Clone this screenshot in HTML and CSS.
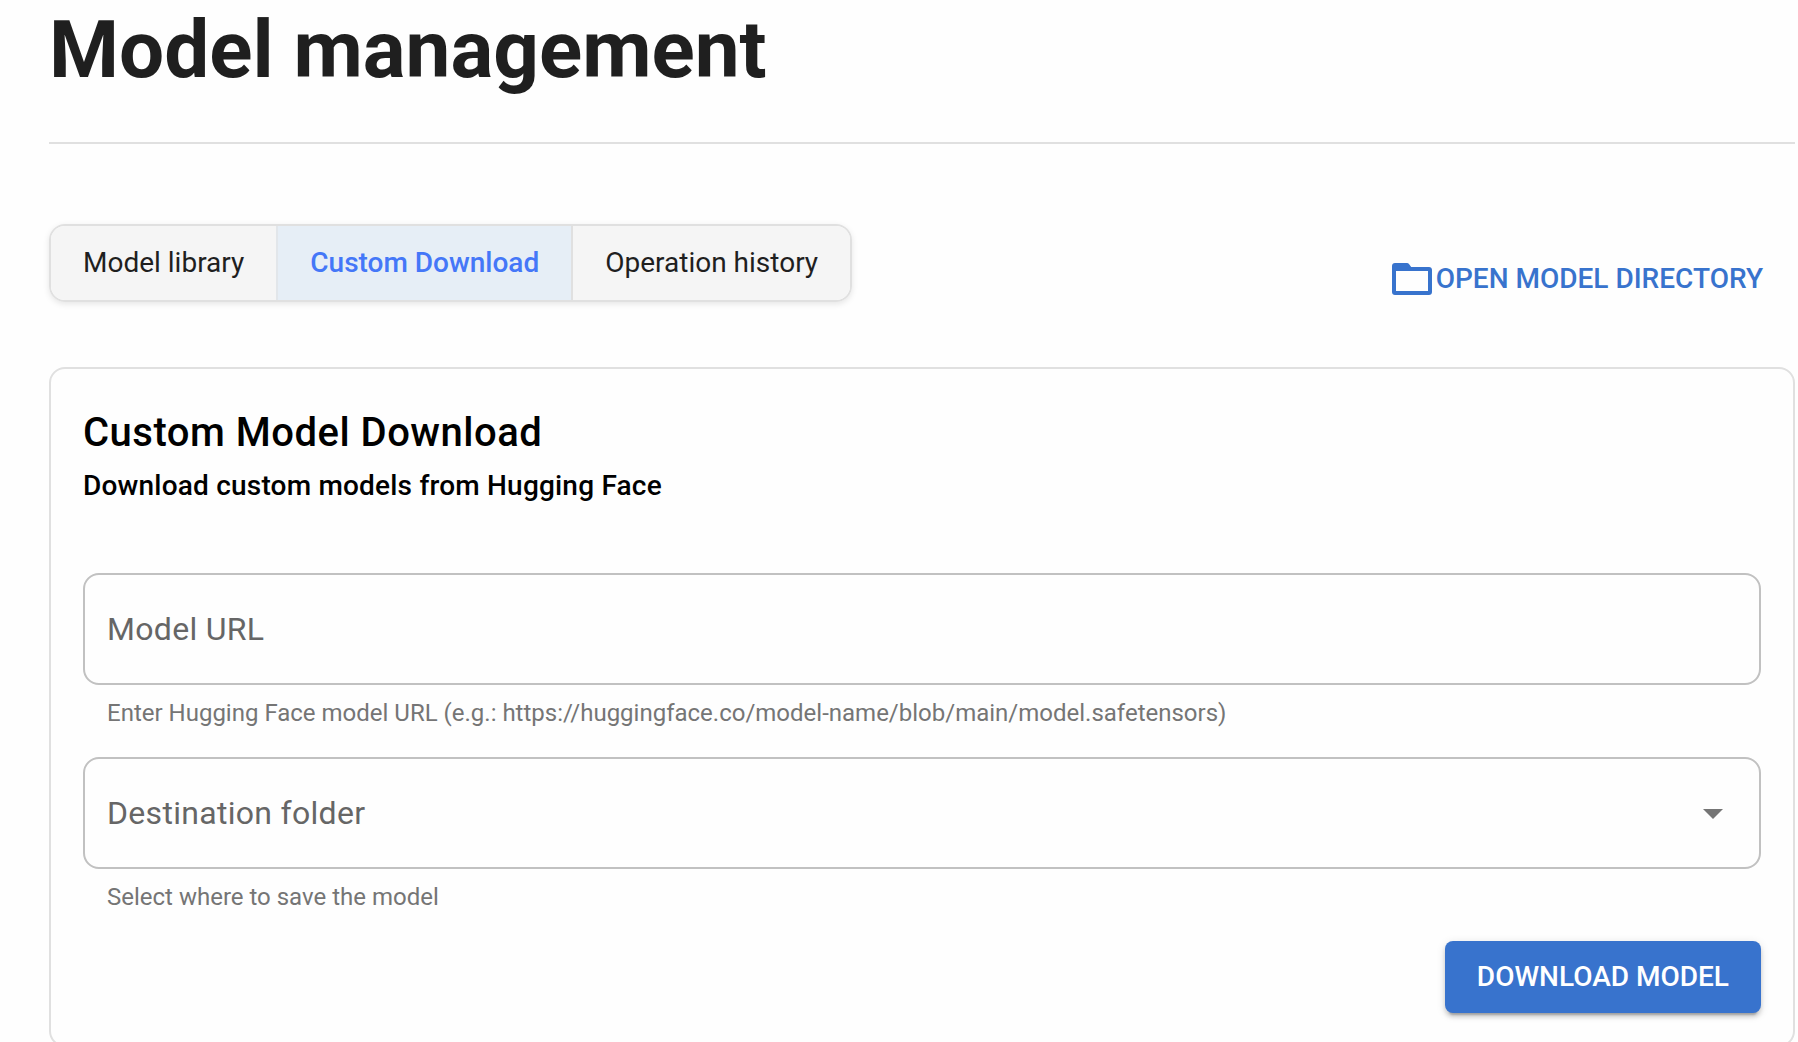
FILE: index.html
```html
<!DOCTYPE html>
<html lang="en">
<head>
<meta charset="utf-8">
<title>Model management</title>
<link rel="stylesheet" href="styles.css">
</head>
<body>
<main class="page">
  <h1 class="page-title">Model management</h1>
  <div class="toolbar">
    <nav class="tabs">
      <button class="tab">Model library</button>
      <button class="tab tab-active">Custom Download</button>
      <button class="tab">Operation history</button>
    </nav>
    <button class="open-dir">
      <svg class="folder-icon" viewBox="0 0 24 24"><path d="M20 18H4V8h16m0-2h-8.400L10.500 4.500Q10.100 4 9.500 4H3.500C2.600 4 2 4.600 2 5.500v13c0 .900.600 1.500 1.500 1.500h17c.900 0 1.500-.600 1.500-1.500v-11C22 6.600 21.400 6 20.500 6Z"/></svg>
      <span>OPEN MODEL DIRECTORY</span>
    </button>
  </div>
  <section class="card">
    <h2 class="card-title">Custom Model Download</h2>
    <h3 class="card-subtitle">Download custom models from Hugging Face</h3>
    <div class="field">
      <div class="control">Model URL</div>
      <p class="helper">Enter Hugging Face model URL (e.g.: https://huggingface.co/model-name/blob/main/model.safetensors)</p>
    </div>
    <div class="field">
      <div class="control">
        <span>Destination folder</span>
        <svg class="arrow-icon" viewBox="0 0 24 24"><path d="m7 10 5 5 5-5z"/></svg>
      </div>
      <p class="helper">Select where to save the model</p>
    </div>
    <button class="submit">DOWNLOAD MODEL</button>
  </section>
</main>
</body>
</html>
```
FILE: styles.css
```css
* {
  box-sizing: border-box;
}

html {
  overflow: hidden;
}

body {
  margin: 0;
  background: #fefefe;
  font-family: Roboto, sans-serif;
}

button {
  margin: 0;
  border: 0;
  font: 400 28px/44px Roboto, sans-serif;
  white-space: nowrap;
}

.page {
  padding: 4px 3px 0 49px;
}

.page-title {
  margin: 0 0 80px;
  padding-bottom: 46px;
  border-bottom: 2px solid #e0e0e0;
  color: #1f1f1f;
  font-size: 80px;
  font-weight: 700;
  line-height: 92px;
}

.toolbar {
  display: flex;
  justify-content: space-between;
  align-items: flex-start;
  margin-bottom: 64px;
}

.tabs {
  display: flex;
  height: 78px;
  border: 2px solid #e0e0e0;
  border-radius: 16px;
  overflow: hidden;
  box-shadow: 0 2px 6px rgba(0, 0, 0, 0.1);
}

.tab {
  padding: 0 32px;
  background: #f5f5f5;
  color: #1f1f1f;
}

.tab + .tab {
  border-left: 2px solid #e0e0e0;
}

.tab.tab-active {
  background: #e6eef6;
  border-left-color: #e2e6ea;
  color: #4477f8;
  font-weight: 500;
}

.open-dir {
  display: flex;
  align-items: center;
  height: 48px;
  margin: 31px 32px 0 0;
  padding: 0;
  background: none;
  color: #3873cd;
  font-weight: 500;
}

.folder-icon {
  width: 48px;
  height: 48px;
  fill: currentColor;
}

.card {
  display: flex;
  flex-direction: column;
  height: 680px;
  padding: 32px;
  border: 2px solid #e0e0e0;
  border-radius: 16px;
}

.card-title {
  margin: 0;
  color: #000;
  font-size: 40px;
  font-weight: 500;
  line-height: 63px;
  letter-spacing: 0.5px;
}

.card-subtitle {
  margin: 0 0 65px;
  color: #000;
  font-size: 28px;
  font-weight: 500;
  line-height: 44px;
  letter-spacing: 0.2px;
}

.field {
  margin-bottom: 24px;
}

.control {
  display: flex;
  justify-content: space-between;
  align-items: center;
  height: 112px;
  padding: 0 22px;
  border: 2px solid #c1c1c1;
  border-radius: 16px;
  color: #666;
  font-size: 32px;
  letter-spacing: 0.3px;
}

.arrow-icon {
  width: 48px;
  height: 48px;
  fill: #757575;
}

.helper {
  margin: 8px 24px 0;
  color: #757575;
  font-size: 24px;
  line-height: 40px;
}

.submit {
  align-self: flex-end;
  flex: none;
  height: 72px;
  padding: 0 32px;
  border-radius: 8px;
  background: #3873cd;
  box-shadow: 0 6px 2px -4px rgba(0, 0, 0, 0.2), 0 4px 4px rgba(0, 0, 0, 0.14), 0 2px 10px rgba(0, 0, 0, 0.12);
  color: #fff;
  font-weight: 500;
}
```
